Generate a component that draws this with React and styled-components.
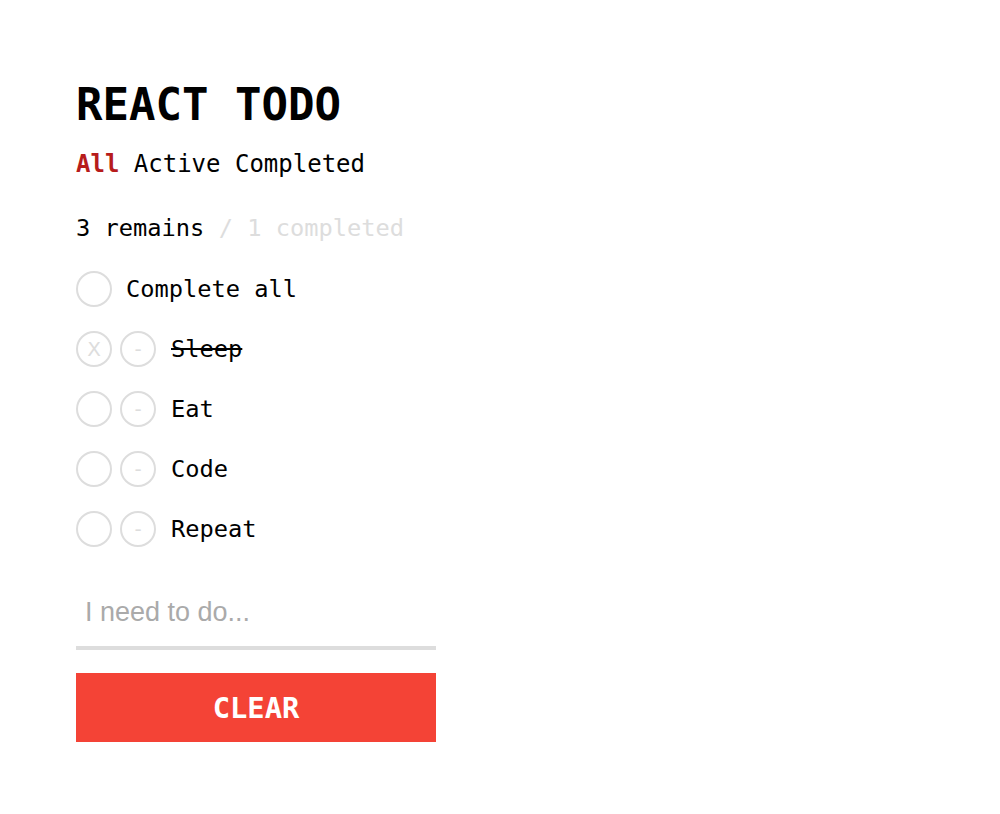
import styled, { createGlobalStyle } from "styled-components";

const GlobalStyle = createGlobalStyle`
  body {
    margin: 0;
    background: #fff;
    font-family: "DejaVu Sans Mono", monospace;
    color: #000;
  }
`;

const Page = styled.div`
  padding: 76px 76px;
  width: 360px;
  display: flex;
  flex-direction: column;
`;

const Title = styled.h1`
  margin: 0;
  font-size: 44px;
  font-weight: bold;
  line-height: 58px;
`;

const Filters = styled.div`
  margin-top: 15px;
  font-size: 24px;
  line-height: 30px;
  white-space: pre;
`;

const Filter = styled.span`
  color: ${(p) => (p.active ? "#b71c1c" : "#000")};
  font-weight: ${(p) => (p.active ? "bold" : "normal")};
  cursor: pointer;
`;

const Stats = styled.div`
  margin-top: 34px;
  font-size: 23.7px;
  line-height: 30px;
`;

const Muted = styled.span`
  color: #ddd;
`;

const List = styled.div`
  display: flex;
  flex-direction: column;
  gap: 24px;
  margin-top: 28px;
`;

const Row = styled.div`
  display: flex;
  align-items: center;
  gap: 8px;
  height: 36px;
`;

const Circle = styled.button`
  width: 36px;
  height: 36px;
  border-radius: 50%;
  border: 2px solid #ddd;
  background: #fff;
  color: #ddd;
  font-family: "DejaVu Sans", sans-serif;
  font-size: 20px;
  padding: 0;
  display: flex;
  align-items: center;
  justify-content: center;
  flex-shrink: 0;
`;

const Label = styled.span`
  font-size: 23.7px;
  margin-left: ${(p) => p.offset || "7px"};
  text-decoration: ${(p) => (p.done ? "line-through" : "none")};
`;

const Input = styled.input`
  margin-top: 44px;
  width: 100%;
  box-sizing: border-box;
  border: none;
  border-bottom: 4px solid #ddd;
  outline: none;
  padding: 6px 9px 18px;
  font-family: "Liberation Sans", Arial, sans-serif;
  font-size: 27px;
  color: #000;
  &::placeholder {
    color: #aaa;
  }
`;

const ClearButton = styled.button`
  margin-top: 23px;
  width: 100%;
  height: 69px;
  border: none;
  background: #f44336;
  color: #fff;
  font-family: "DejaVu Sans Mono", monospace;
  font-weight: bold;
  font-size: 28.8px;
`;

const todos = [
  { text: "Sleep", done: true },
  { text: "Eat", done: false },
  { text: "Code", done: false },
  { text: "Repeat", done: false },
];

export default function App() {
  return (
    <>
      <GlobalStyle />
      <Page>
        <Title>REACT TODO</Title>
        <Filters>
          <Filter active>All</Filter> <Filter>Active</Filter>{" "}
          <Filter>Completed</Filter>
        </Filters>
        <Stats>
          3 remains <Muted>/ 1 completed</Muted>
        </Stats>
        <List>
          <Row>
            <Circle />
            <Label offset="6px">Complete all</Label>
          </Row>
          {todos.map((t) => (
            <Row key={t.text}>
              <Circle>{t.done ? "X" : ""}</Circle>
              <Circle>-</Circle>
              <Label done={t.done}>{t.text}</Label>
            </Row>
          ))}
        </List>
        <Input placeholder="I need to do..." />
        <ClearButton>CLEAR</ClearButton>
      </Page>
    </>
  );
}
